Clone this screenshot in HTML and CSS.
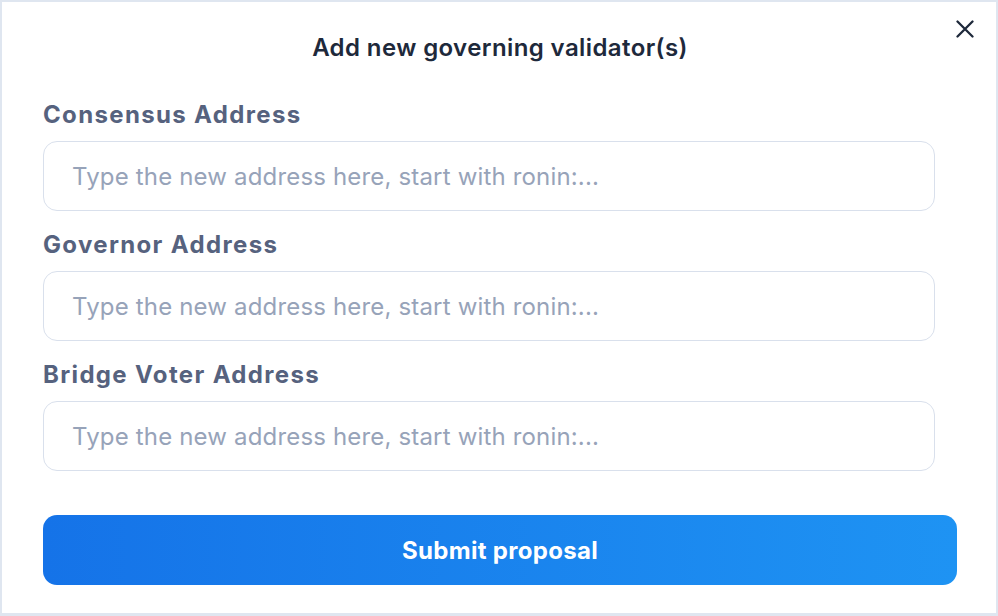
FILE: index.html
```html
<!DOCTYPE html>
<html lang="en">
<head>
<meta charset="utf-8">
<title>Add new governing validator(s)</title>
<link rel="stylesheet" href="styles.css">
</head>
<body>
<div class="modal">
  <h1 class="title">Add new governing validator(s)</h1>
  <button class="close" type="button" aria-label="Close">
    <svg width="18" height="18" viewBox="0 0 18 18" fill="none"><path d="M1.5 1.5L16.5 16.5M16.5 1.5L1.5 16.5" stroke="#1e293b" stroke-width="2.3" stroke-linecap="round"/></svg>
  </button>
  <form class="form">
    <div class="field">
      <label class="label">Consensus Address</label>
      <input class="input" type="text" placeholder="Type the new address here, start with ronin:...">
    </div>
    <div class="field">
      <label class="label">Governor Address</label>
      <input class="input" type="text" placeholder="Type the new address here, start with ronin:...">
    </div>
    <div class="field">
      <label class="label">Bridge Voter Address</label>
      <input class="input" type="text" placeholder="Type the new address here, start with ronin:...">
    </div>
    <button class="submit" type="button">Submit proposal</button>
  </form>
</div>
</body>
</html>
```
FILE: styles.css
```css
html, body {
  margin: 0;
  padding: 0;
  background: #dfe6f0;
}
.modal {
  position: relative;
  width: 998px;
  height: 616px;
  box-sizing: border-box;
  border: 2px solid #dfe6f0;
  border-bottom-width: 3px;
  background: #fff;
  padding: 31px 39px 0 41px;
  font-family: Inter, "Noto Sans", sans-serif;
}
.title {
  margin: 0;
  text-align: center;
  font-size: 24px;
  line-height: 30px;
  font-weight: 600;
  letter-spacing: 0.4px;
  color: #1e293b;
}
.close {
  position: absolute;
  top: 18px;
  right: 22px;
  width: 18px;
  height: 18px;
  padding: 0;
  border: 0;
  background: none;
  display: flex;
}
.form {
  margin-top: 37px;
  display: flex;
  flex-direction: column;
  gap: 19px;
}
.field {
  display: flex;
  flex-direction: column;
  gap: 11px;
}
.label {
  font-size: 24px;
  line-height: 30px;
  font-weight: 700;
  letter-spacing: 1.35px;
  color: #56627e;
}
.input {
  width: 892px;
  height: 70px;
  box-sizing: border-box;
  border: 1px solid #d9e0ec;
  border-radius: 14px;
  padding: 0 0 0 28px;
  font-family: inherit;
  font-size: 24px;
  letter-spacing: 0.17px;
  color: #1e293b;
  outline: none;
}
.input::placeholder {
  color: #97a3b9;
}
.submit {
  margin-top: 25px;
  width: 914px;
  height: 70px;
  border: 0;
  border-radius: 14px;
  background: linear-gradient(90deg, #1573e8 0%, #1e93f3 100%);
  color: #fff;
  font-family: inherit;
  font-size: 24px;
  font-weight: 700;
  letter-spacing: 0.3px;
}
```
